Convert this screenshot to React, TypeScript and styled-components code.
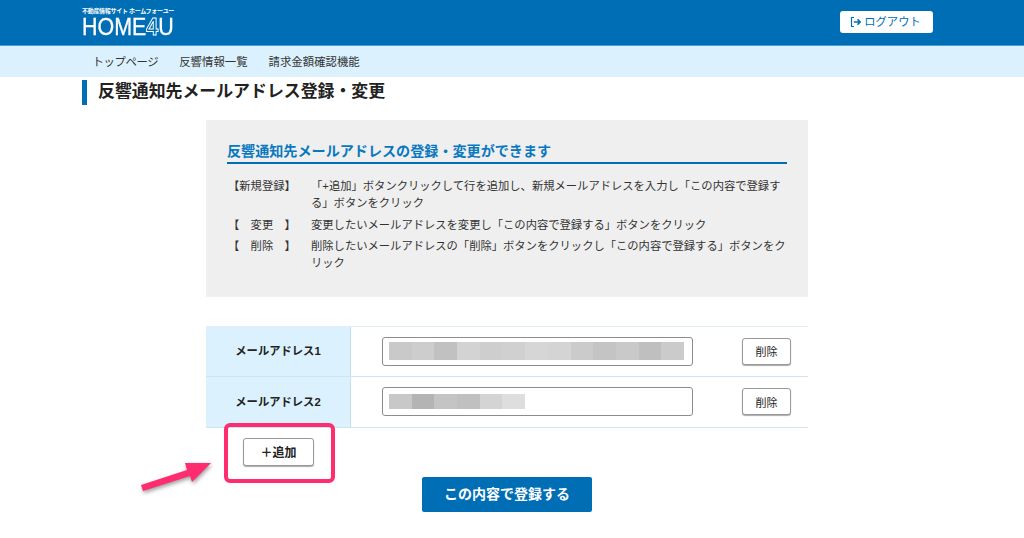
import React from "react";
import styled, { createGlobalStyle } from "styled-components";

const Global = createGlobalStyle`
  html, body { margin: 0; padding: 0; background: #fff; }
  body { font-family: "Liberation Sans", "Noto Sans CJK JP", sans-serif; color: #333; }
  * { box-sizing: border-box; }
`;
const Page = styled.div`
  position: relative;
  width: 1024px;
  height: 538px;
  overflow: hidden;
`;
const Header = styled.header`
  height: 46px;
  background: #006eb4;
  border-bottom: 1px solid #4a9fd6;
  padding: 8px 91px 0 82px;
  display: flex;
  justify-content: space-between;
  align-items: flex-start;
`;
const Logo = styled.div`
  display: flex;
  flex-direction: column;
  color: #fff;
`;
const LogoSub = styled.span`
  font-size: 6px;
  line-height: 7px;
  font-weight: 700;
  letter-spacing: -0.3px;
  white-space: nowrap;
`;
const LogoMain = styled.span`
  display: inline-block;
  font-size: 24.5px;
  line-height: 21px;
  margin-top: 1px;
  white-space: nowrap;
  transform: scaleX(0.875);
  transform-origin: left center;
  -webkit-text-stroke: 0.3px #fff;
`;
const LogoFour = styled.span`
  color: #006eb4;
  -webkit-text-stroke: 1px #fff;
  font-weight: 700;
`;
const Logout = styled.button`
  width: 93px;
  height: 22px;
  margin-top: 3px;
  background: #fff;
  border: 0;
  border-radius: 3px;
  color: #006eb4;
  font: 11.3px "Liberation Sans", "Noto Sans CJK JP", sans-serif;
  display: flex;
  align-items: center;
  justify-content: center;
  gap: 2px;
  padding: 0 2px 2px 0;
`;
const LogoutIcon = styled.svg`
  flex: none;
  margin-top: 2px;
`;
const Nav = styled.nav`
  height: 31px;
  background: #dbf1fd;
  padding: 0 0 1px 92.5px;
  display: flex;
  align-items: center;
  gap: 21px;
  font-size: 11.4px;
  color: #333;
`;
const NavItem = styled.span<{ $tight?: boolean }>`
  letter-spacing: ${(p) => (p.$tight ? "-0.4px" : "0")};
`;
const Title = styled.h1`
  margin: 3px 0 0 82px;
  height: 25px;
  border-left: 5px solid #006eb4;
  padding-left: 11px;
  font-size: 16.9px;
  line-height: 24px;
  font-weight: 700;
  color: #222;
`;
const Main = styled.main`
  width: 602px;
  margin: 15px 0 0 206px;
`;
const Info = styled.section`
  height: 177px;
  background: #efefef;
  padding: 22px 21px 0 21px;
`;
const InfoHead = styled.h2`
  margin: 0;
  height: 22px;
  border-bottom: 2px solid #006eb4;
  color: #0a78bf;
  font-size: 14.1px;
  line-height: 18px;
  font-weight: 700;
`;
const InfoList = styled.dl`
  margin: 14px 0 0;
  font-size: 11.3px;
  line-height: 17px;
  color: #333;
`;
const InfoRow = styled.div`
  display: grid;
  grid-template-columns: 84px 1fr;
  padding-bottom: 4.7px;
`;
const Term = styled.dt`
  padding-left: 1px;
  white-space: pre;
`;
const Desc = styled.dd`
  margin: 0;
`;
const Table = styled.div`
  margin-top: 29px;
  border-top: 1px solid #e1eef6;
`;
const Row = styled.div`
  display: grid;
  grid-template-columns: 145px 1fr;
  height: 50.4px;
  border-bottom: 1px solid #cfe5f2;
`;
const Label = styled.div`
  background: #dbf1fd;
  border-right: 1px solid #c5e0ef;
  display: flex;
  align-items: center;
  justify-content: center;
  padding: 0 0 3px;
  font-size: 11.3px;
  font-weight: 700;
  color: #222;
`;
const Cell = styled.div`
  display: flex;
  align-items: center;
  padding-left: 31px;
  padding-bottom: 1px;
`;
const Field = styled.div`
  width: 311px;
  height: 29px;
  border: 1px solid #8c8c8c;
  border-radius: 3px;
  display: flex;
  align-items: center;
  padding-left: 6px;
  background: #fff;
`;
const Mosaic = styled.div<{ $h: number }>`
  display: flex;
  height: ${(p) => p.$h}px;
`;
const Tile = styled.span<{ $c: string }>`
  width: 22.7px;
  background: ${(p) => p.$c};
`;
const Btn = styled.button`
  background: #fff;
  border: 1px solid #999;
  border-radius: 3px;
  box-shadow: 0 1px 1px #aaa;
  font-family: "Liberation Sans", "Noto Sans CJK JP", sans-serif;
  color: #222;
  padding: 0;
`;
const DeleteBtn = styled(Btn)`
  width: 49px;
  height: 27px;
  margin-left: 49px;
  font-size: 11px;
`;
const AddBtn = styled(Btn)`
  display: block;
  width: 71px;
  height: 28px;
  margin: 10px 0 0 37px;
  font-size: 12px;
  font-weight: 700;
`;
const Submit = styled.button`
  display: block;
  width: 170px;
  height: 35px;
  margin: 11px 0 0 216px;
  background: #006eb4;
  border: 0;
  border-radius: 2px;
  color: #fff;
  font: 700 14px "Liberation Sans", "Noto Sans CJK JP", sans-serif;
  padding: 0 0 2px;
`;
const Highlight = styled.div`
  position: absolute;
  left: 224px;
  top: 423px;
  width: 111px;
  height: 60px;
  border: 4px solid #ff2d6f;
  border-radius: 6px;
`;
const Arrow = styled.svg`
  position: absolute;
  left: 135px;
  top: 455px;
  overflow: visible;
  filter: drop-shadow(1px 2px 2px rgba(0, 0, 0, 0.4));
`;

const row1 = ["#c9c9c9","#cdcdcd","#c1c1c1","#d3d3d3","#cecece","#d0d0d0","#d6d6d6","#d4d4d4","#cbcbcb","#c4c4c4","#c9c9c9","#bfbfbf","#cbcbcb"];
const row2 = ["#c8c8c8","#b4b4b4","#c4c4c4","#c0c0c0","#d4d4d4","#dedede"];

export default function App() {
  return (
    <Page>
      <Global />
      <Header>
        <Logo>
          <LogoSub>不動産情報サイト ホームフォーユー</LogoSub>
          <LogoMain>HOME<LogoFour>4</LogoFour>U</LogoMain>
        </Logo>
        <Logout>
          <LogoutIcon width="12" height="12" viewBox="0 0 12 12" fill="none" stroke="#006eb4" strokeWidth="1.2">
            <path d="M4 1.5H1.5v9H4" />
            <path d="M3.8 6H10M7.5 3.4 10.2 6 7.5 8.6" strokeWidth="1.5" />
          </LogoutIcon>
          ログアウト
        </Logout>
      </Header>
      <Nav>
        <NavItem $tight>トップページ</NavItem>
        <NavItem>反響情報一覧</NavItem>
        <NavItem>請求金額確認機能</NavItem>
      </Nav>
      <Title>反響通知先メールアドレス登録・変更</Title>
      <Main>
        <Info>
          <InfoHead>反響通知先メールアドレスの登録・変更ができます</InfoHead>
          <InfoList>
            <InfoRow>
              <Term>【新規登録】</Term>
              <Desc>「+追加」ボタンクリックして行を追加し、新規メールアドレスを入力し「この内容で登録する」ボタンをクリック</Desc>
            </InfoRow>
            <InfoRow>
              <Term>【　変更　】</Term>
              <Desc>変更したいメールアドレスを変更し「この内容で登録する」ボタンをクリック</Desc>
            </InfoRow>
            <InfoRow>
              <Term>【　削除　】</Term>
              <Desc>削除したいメールアドレスの「削除」ボタンをクリックし「この内容で登録する」ボタンをクリック</Desc>
            </InfoRow>
          </InfoList>
        </Info>
        <Table>
          <Row>
            <Label>メールアドレス1</Label>
            <Cell>
              <Field>
                <Mosaic $h={18}>{row1.map((c, i) => <Tile key={i} $c={c} />)}</Mosaic>
              </Field>
              <DeleteBtn>削除</DeleteBtn>
            </Cell>
          </Row>
          <Row>
            <Label>メールアドレス2</Label>
            <Cell>
              <Field>
                <Mosaic $h={15}>{row2.map((c, i) => <Tile key={i} $c={c} />)}</Mosaic>
              </Field>
              <DeleteBtn>削除</DeleteBtn>
            </Cell>
          </Row>
        </Table>
        <AddBtn>＋追加</AddBtn>
        <Submit>この内容で登録する</Submit>
      </Main>
      <Highlight />
      <Arrow width="80" height="40" viewBox="0 0 80 40">
        <path d="M6 30 52 15 50 8 76 8 57 27 55 21 8 36Z" fill="#ff2d6f" />
      </Arrow>
    </Page>
  );
}
